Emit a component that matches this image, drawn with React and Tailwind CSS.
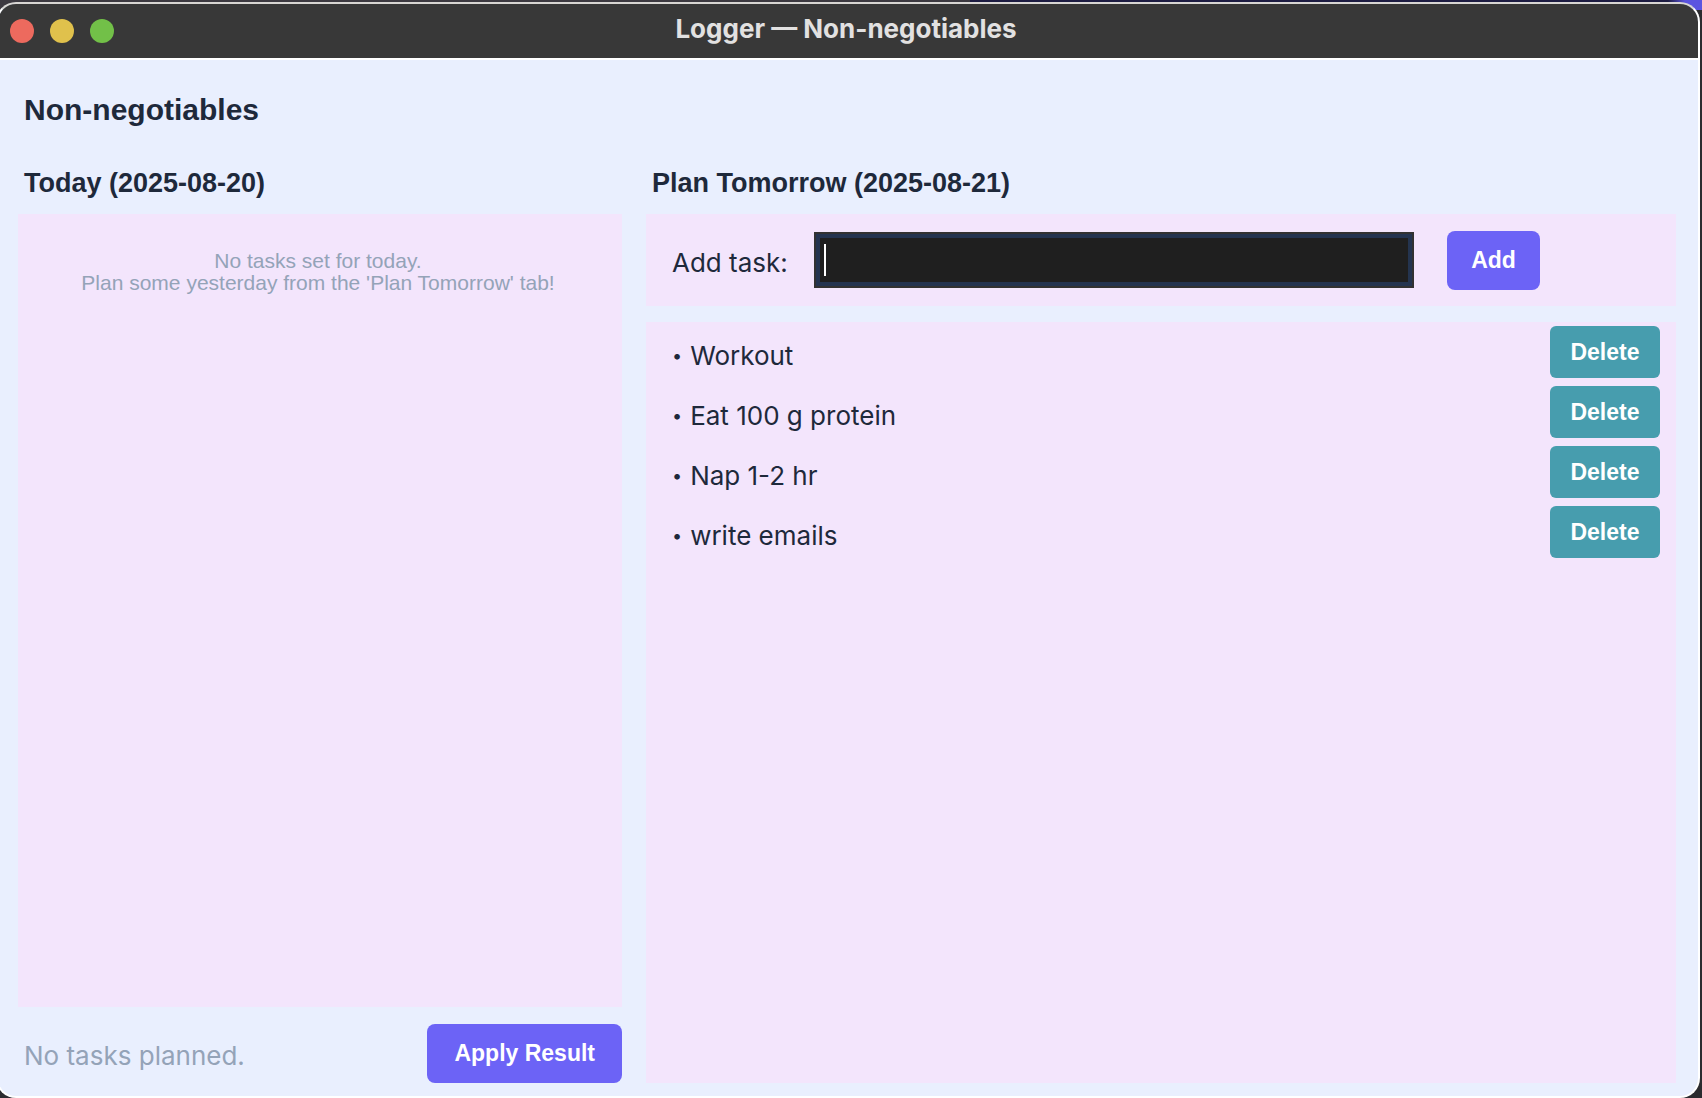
import { useState } from "react";

const initialTasks = ["Workout", "Eat 100 g protein", "Nap 1-2 hr", "write emails"];

const helvetica = "font-['Liberation_Sans',sans-serif]";

function TitleBar() {
  return (
    <header className="grid h-[56px] shrink-0 grid-cols-[1fr_auto_1fr] items-center border-b-2 border-white bg-[#383838] pr-4 pl-3">
      <div className="flex gap-4">
        <button aria-label="Close" className="size-6 rounded-full bg-[#ed6a5e]" />
        <button aria-label="Minimize" className="size-6 rounded-full bg-[#e0c14c]" />
        <button aria-label="Zoom" className="size-6 rounded-full bg-[#72c048]" />
      </div>
      <p className="pb-1 text-[26px] leading-8 font-bold text-[#e2e1e1]">Logger — Non-negotiables</p>
    </header>
  );
}

function TodayColumn() {
  return (
    <section className="flex min-w-0 flex-col">
      <h2 className={`${helvetica} pl-1.5 text-[27px] leading-8 font-bold`}>Today (2025-08-20)</h2>
      <div className={`${helvetica} mt-[15px] flex-1 bg-[#f3e5fc] pt-9 pr-1 text-center text-[21px] leading-[22px] text-[#94a3b8]`}>
        <p>No tasks set for today.</p>
        <p>Plan some yesterday from the 'Plan Tomorrow' tab!</p>
      </div>
      <div className="mt-[17px] flex items-center justify-between pl-1.5">
        <p className="pt-1 text-[26px] leading-8 text-[#94a3b8]">No tasks planned.</p>
        <button className={`${helvetica} h-[59px] rounded-lg bg-[#6c63f6] px-[27px] text-[23px] font-bold text-white`}>
          Apply Result
        </button>
      </div>
    </section>
  );
}

function PlanColumn() {
  const [tasks, setTasks] = useState(initialTasks);
  const [draft, setDraft] = useState("");

  const addTask = (event) => {
    event.preventDefault();
    if (draft.trim()) {
      setTasks([...tasks, draft.trim()]);
      setDraft("");
    }
  };

  return (
    <section className="flex min-w-0 flex-col">
      <h2 className={`${helvetica} pl-1.5 text-[27px] leading-8 font-bold`}>Plan Tomorrow (2025-08-21)</h2>
      <form onSubmit={addTask} className="mt-[15px] flex h-[92px] items-center bg-[#f3e5fc] pr-[136px] pl-[26px]">
        <label htmlFor="task" className="w-[142px] shrink-0 pt-1.5 text-[26px] leading-8">
          Add task:
        </label>
        <div className="relative min-w-0 flex-1 border-2 border-[#323232]">
          <input
            id="task"
            value={draft}
            onChange={(event) => setDraft(event.target.value)}
            className="block h-[52px] w-full border-4 border-[#24344f] bg-[#1f1f1f] px-1 text-[26px] text-white caret-transparent outline-none focus:caret-white"
          />
          {draft === "" && (
            <span className="pointer-events-none absolute top-2.5 left-2 h-8 w-0.5 bg-white" />
          )}
        </div>
        <button className={`${helvetica} ml-[33px] h-[59px] w-[93px] shrink-0 rounded-lg bg-[#6c63f6] text-[23px] font-bold text-white`}>
          Add
        </button>
      </form>
      <ul className="mt-4 flex flex-1 flex-col gap-2 bg-[#f3e5fc] pt-1 pr-4 pl-[26px]">
        {tasks.map((task, index) => (
          <li key={index} className="flex items-center justify-between">
            <span className="flex items-center gap-2 pt-2 text-[26px] leading-8">
              <span className="text-[18px]">•</span>
              {task}
            </span>
            <button
              onClick={() => setTasks(tasks.filter((_, i) => i !== index))}
              className={`${helvetica} h-[52px] w-[110px] rounded-md bg-[#479dae] text-[23px] font-bold text-white`}
            >
              Delete
            </button>
          </li>
        ))}
      </ul>
    </section>
  );
}

export default function App() {
  return (
    <div className="flex min-h-screen flex-col bg-[#2b2b2f] bg-[linear-gradient(to_right,#3c3940_57%,#1d1c42_57%,#1d1c42_98%,#5b54e0_99%)] bg-[length:100%_10px] bg-no-repeat pt-0.5 pr-0.5 font-['Inter',sans-serif] text-[#1e293b]">
      <div className="-ml-1 flex flex-1 flex-col overflow-hidden rounded-[20px] border-2 border-white border-t-[#d8d6d3] bg-[#e9effe]">
        <TitleBar />
        <main className="flex flex-1 flex-col pt-8 pr-[22px] pb-[13px] pl-5">
          <h1 className={`${helvetica} pl-1.5 text-[30px] leading-9 font-bold`}>Non-negotiables</h1>
          <div className="mt-[39px] grid flex-1 grid-cols-[604fr_1030fr] gap-6">
            <TodayColumn />
            <PlanColumn />
          </div>
        </main>
      </div>
    </div>
  );
}
